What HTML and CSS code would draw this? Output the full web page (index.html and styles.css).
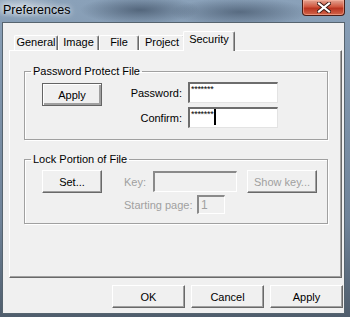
FILE: index.html
```html
<!DOCTYPE html>
<html lang="en">
<head>
  <meta charset="UTF-8">
  <title>Preferences</title>
  <link rel="stylesheet" href="styles.css">
</head>
<body>
  <div class="window">
    <div class="titlebar">
      <span class="title">Preferences</span>
      <span class="close">
        <svg width="14" height="11" viewBox="0 0 14 11">
          <path d="M2 1.5 L12 9.5 M12 1.5 L2 9.5" stroke="#3a1812" stroke-width="4" stroke-linecap="square"/>
          <path d="M2 1.5 L12 9.5 M12 1.5 L2 9.5" stroke="#fff" stroke-width="2.2" stroke-linecap="square"/>
        </svg>
      </span>
    </div>

    <div class="client">
      <div class="tabs">
        <span class="tab tab-general">General</span>
        <span class="tab tab-image">Image</span>
        <span class="tab tab-file">File</span>
        <span class="tab tab-project">Project</span>
        <span class="tab tab-security active">Security</span>
      </div>

      <div class="panel">
        <fieldset class="group">
          <legend>Password Protect File</legend>
          <div class="pw-grid">
            <button class="btn btn-default">Apply</button>
            <span class="label">Password:</span>
            <div class="field pw"><span class="stars">*******</span></div>
            <span class="label">Confirm:</span>
            <div class="field pw"><span class="stars">*******</span><span class="caret"></span></div>
          </div>
        </fieldset>

        <fieldset class="group group-lock">
          <legend>Lock Portion of File</legend>
          <div class="row">
            <button class="btn">Set...</button>
            <span class="label disabled key-label">Key:</span>
            <div class="field disabled key-field"></div>
            <button class="btn disabled show-key">Show key...</button>
          </div>
          <div class="row row-page">
            <span class="label disabled">Starting page:</span>
            <div class="field disabled page-field">1</div>
          </div>
        </fieldset>
      </div>

      <div class="actions">
        <button class="btn btn-wide">OK</button>
        <button class="btn btn-wide">Cancel</button>
        <button class="btn btn-wide">Apply</button>
      </div>
    </div>
  </div>
</body>
</html>
```

FILE: styles.css
```css
body {
  margin: 0;
  width: 350px;
  height: 317px;
  overflow: hidden;
  font-family: "Liberation Sans", Arial, sans-serif;
  font-size: 11px;
  color: #000;
}

.window {
  height: 317px;
  display: flex;
  flex-direction: column;
  background-color: #7e94ab;
  background-image:
    radial-gradient(ellipse 60px 14px at 140px 10px, rgba(40,55,75,0.55), transparent),
    radial-gradient(ellipse 70px 14px at 240px 12px, rgba(40,55,75,0.5), transparent),
    radial-gradient(ellipse 40px 12px at 20px 6px, rgba(230,235,240,0.5), transparent),
    linear-gradient(#8aa1b9, #6f8399 70%, #4f5d6c);
}

.titlebar {
  height: 22px;
  display: flex;
  justify-content: space-between;
  align-items: flex-start;
}

.title {
  margin: 3px 0 0 3px;
  font-size: 12.5px;
  color: #000;
  text-shadow: 0 0 5px rgba(255,255,255,0.9), 0 0 9px rgba(255,255,255,0.7);
}

.close {
  width: 41px;
  height: 15px;
  margin-right: 5px;
  display: flex;
  align-items: center;
  justify-content: center;
  border: 1px solid #4a1d16;
  border-top: none;
  border-radius: 0 0 4px 4px;
  background: linear-gradient(#e3a493, #d0573f 45%, #b93420 55%, #d2654a);
  box-shadow: inset 0 0 0 1px rgba(255,190,170,0.5);
}

.client {
  height: 290px;
  margin: 0 5px 0 2px;
  background: #f0f0f0;
  border: 1px solid #56646f;
  display: flex;
  flex-direction: column;
}

.tabs {
  display: flex;
  align-items: flex-end;
  height: 19px;
  margin-top: 8px;
  padding-left: 11px;
  position: relative;
  z-index: 1;
}

.tab {
  box-sizing: border-box;
  height: 15px;
  line-height: 13px;
  text-align: center;
  background: #f0f0f0;
  border-left: 1px solid #fff;
  border-top: 1px solid #fff;
  border-right: 1px solid #696969;
  box-shadow: inset -1px 0 0 #a0a0a0;
  border-radius: 2px 2px 0 0;
}

.tab-general { width: 44px; }
.tab-image { width: 41px; }
.tab-file { width: 40px; }
.tab-project { width: 46px; }
.tab-security { width: 48px; }

.tab.active {
  width: 52px;
  height: 20px;
  margin: 0 -2px -1px -2px;
  line-height: 15px;
  padding-bottom: 2px;
  position: relative;
}

.panel {
  box-sizing: border-box;
  height: 228px;
  width: 333px;
  margin-left: 6px;
  padding: 14px 0 0 14px;
  border-top: 1px solid #fff;
  border-left: 1px solid #fff;
  border-right: 1px solid #696969;
  border-bottom: 1px solid #696969;
  box-shadow: inset -1px -1px 0 #a0a0a0;
}

.group {
  box-sizing: border-box;
  width: 304px;
  margin: 0;
  padding: 4px 0 11px 17px;
  border: 1px solid #a0a0a0;
  box-shadow: inset 1px 1px 0 #fff, 1px 1px 0 #fff;
  min-inline-size: 0;
}

.group legend {
  margin-left: -11px;
  padding: 0 2px;
  line-height: 13px;
}

.group-lock {
  margin-top: 13px;
  padding-bottom: 9px;
}

.pw-grid {
  display: grid;
  grid-template-columns: 60px 74px 90px;
  grid-template-rows: 21px 21px;
  column-gap: 6px;
  row-gap: 4px;
  align-items: center;
}

.pw-grid .btn-default {
  grid-row: 1;
  align-self: start;
  margin-top: 1px;
}

.pw-grid .label:nth-of-type(1) { grid-column: 2; grid-row: 1; }
.pw-grid .label:nth-of-type(2) { grid-column: 2; grid-row: 2; }
.pw-grid .field { grid-column: 3; }

.label {
  text-align: right;
  white-space: nowrap;
}

.disabled {
  color: #a0a0a0;
}

.btn {
  box-sizing: border-box;
  width: 60px;
  height: 23px;
  padding: 0;
  font: inherit;
  color: #000;
  background: #f0f0f0;
  border-top: 1px solid #fff;
  border-left: 1px solid #fff;
  border-right: 1px solid #696969;
  border-bottom: 1px solid #696969;
  box-shadow: inset -1px -1px 0 #a0a0a0;
}

.btn.disabled {
  color: #a0a0a0;
}

.btn-default {
  border: 1px solid #646464;
  box-shadow: inset 1px 1px 0 #fff, inset -2px -2px 0 #a0a0a0, inset -1px -1px 0 #696969;
}

.btn-wide {
  width: 73px;
}

.field {
  box-sizing: border-box;
  height: 21px;
  background: #fff;
  border-top: 2px solid #6d6d6d;
  border-left: 2px solid #6d6d6d;
  border-right: 1px solid #e3e3e3;
  border-bottom: 1px solid #e3e3e3;
  display: flex;
  align-items: flex-start;
  padding-left: 1px;
}

.field.disabled {
  background: #f0f0f0;
  border-top-color: #8a8a8a;
  border-left-color: #8a8a8a;
  border-right-color: #fff;
  border-bottom-color: #fff;
}

.stars {
  font-size: 9px;
  line-height: 8px;
  margin-top: 1px;
  letter-spacing: -0.3px;
}

.caret {
  width: 2px;
  height: 16px;
  margin-left: 1px;
  background: #000;
}

.row {
  display: flex;
  align-items: center;
}

.key-label {
  margin-left: 22px;
  width: 29px;
  text-align: left;
}

.key-field {
  width: 84px;
}

.show-key {
  width: 70px;
  margin-left: 10px;
}

.row-page {
  margin-top: 2px;
  padding-left: 82px;
}

.row-page .label {
  width: 73px;
  text-align: left;
}

.page-field {
  width: 28px;
  height: 19px;
  align-items: center;
  padding-left: 2px;
  font-size: 12px;
}

.actions {
  display: flex;
  justify-content: flex-end;
  gap: 6px;
  margin-top: 7px;
  padding-right: 1px;
}
```
